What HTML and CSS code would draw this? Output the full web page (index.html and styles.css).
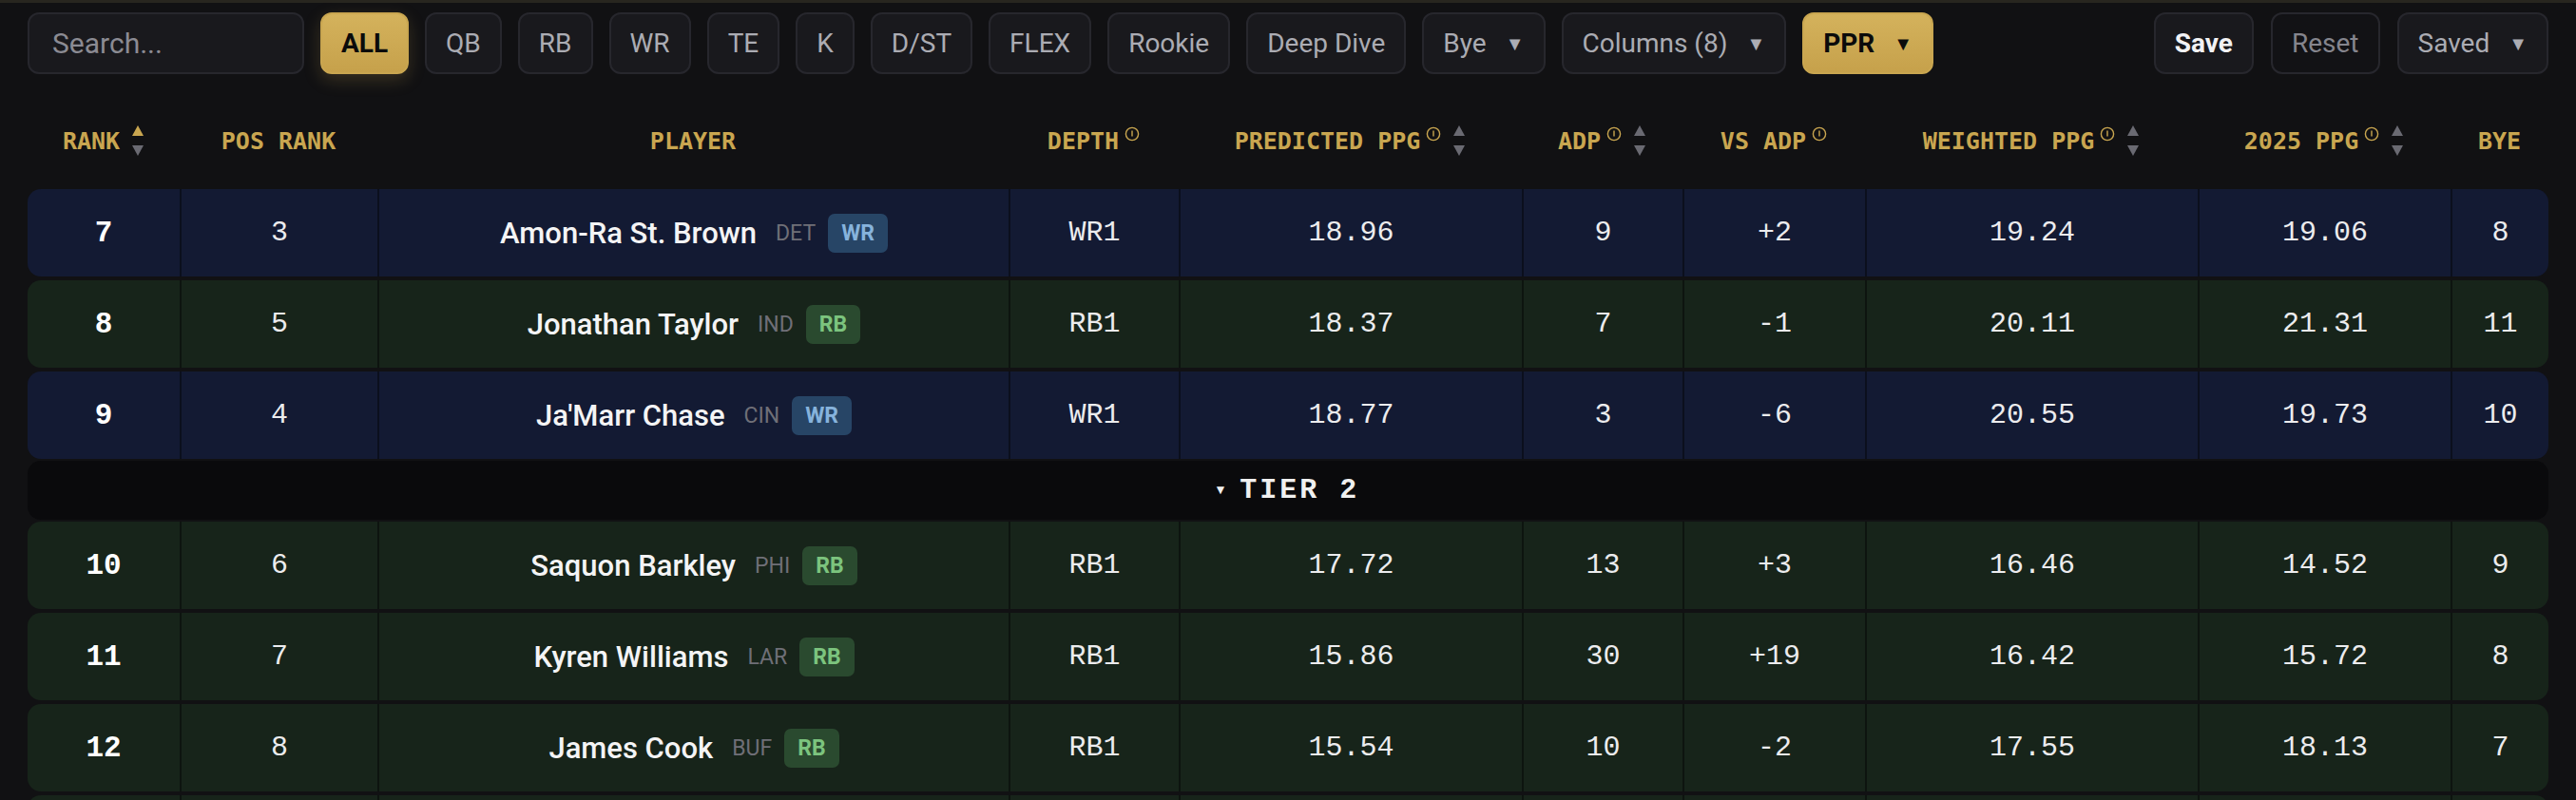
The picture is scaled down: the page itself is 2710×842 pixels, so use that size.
FILE: index.html
```html
<!DOCTYPE html>
<html lang="en">
  <head>
    <meta charset="UTF-8" />
    <title>Draft Rankings</title>
    <link rel="stylesheet" href="styles.css">
  </head>
  <body>
    <div class="page">
      <div class="toolbar">
        <input class="search" type="text" placeholder="Search..." />
        <button class="chip chip-gold chip-glow">ALL</button>
        <button class="chip">QB</button>
        <button class="chip">RB</button>
        <button class="chip">WR</button>
        <button class="chip">TE</button>
        <button class="chip">K</button>
        <button class="chip">D/ST</button>
        <button class="chip">FLEX</button>
        <button class="chip">Rookie</button>
        <button class="chip">Deep Dive</button>
        <button class="chip">Bye <span class="caret">▼</span></button>
        <button class="chip">Columns (8) <span class="caret">▼</span></button>
        <button class="chip chip-gold">PPR <span class="caret">▼</span></button>

        <div class="toolbar-right">
          <button class="chip chip-save">Save</button>
          <button class="chip chip-reset">Reset</button>
          <button class="chip">Saved <span class="caret">▼</span></button>
        </div>
      </div>

      <div class="cols head">
        <div class="hcell">Rank
          <svg class="sort" width="14" height="34" viewBox="0 0 14 34"><path class="up on" d="M7 1 L13 12 H1Z"/><path class="down" d="M1 22 H13 L7 33Z"/></svg>
        </div>
        <div class="hcell">Pos Rank</div>
        <div class="hcell">Player</div>
        <div class="hcell">Depth
          <svg class="info" width="16" height="16" viewBox="0 0 16 16"><circle cx="8" cy="8" r="6.6"/><path d="M8 4.5v6"/></svg>
        </div>
        <div class="hcell">Predicted PPG
          <svg class="info" width="16" height="16" viewBox="0 0 16 16"><circle cx="8" cy="8" r="6.6"/><path d="M8 4.5v6"/></svg>
          <svg class="sort" width="14" height="34" viewBox="0 0 14 34"><path class="up" d="M7 1 L13 12 H1Z"/><path class="down" d="M1 22 H13 L7 33Z"/></svg>
        </div>
        <div class="hcell">ADP
          <svg class="info" width="16" height="16" viewBox="0 0 16 16"><circle cx="8" cy="8" r="6.6"/><path d="M8 4.5v6"/></svg>
          <svg class="sort" width="14" height="34" viewBox="0 0 14 34"><path class="up" d="M7 1 L13 12 H1Z"/><path class="down" d="M1 22 H13 L7 33Z"/></svg>
        </div>
        <div class="hcell">VS ADP
          <svg class="info" width="16" height="16" viewBox="0 0 16 16"><circle cx="8" cy="8" r="6.6"/><path d="M8 4.5v6"/></svg>
        </div>
        <div class="hcell">Weighted PPG
          <svg class="info" width="16" height="16" viewBox="0 0 16 16"><circle cx="8" cy="8" r="6.6"/><path d="M8 4.5v6"/></svg>
          <svg class="sort" width="14" height="34" viewBox="0 0 14 34"><path class="up" d="M7 1 L13 12 H1Z"/><path class="down" d="M1 22 H13 L7 33Z"/></svg>
        </div>
        <div class="hcell">2025 PPG
          <svg class="info" width="16" height="16" viewBox="0 0 16 16"><circle cx="8" cy="8" r="6.6"/><path d="M8 4.5v6"/></svg>
          <svg class="sort" width="14" height="34" viewBox="0 0 14 34"><path class="up" d="M7 1 L13 12 H1Z"/><path class="down" d="M1 22 H13 L7 33Z"/></svg>
        </div>
        <div class="hcell">Bye</div>
      </div>

      <div class="rows">
        <div class="cols row wr">
          <div class="cell rank">7</div>
          <div class="cell">3</div>
          <div class="cell player"><span class="name">Amon-Ra St. Brown</span><span class="team">DET</span><span class="pos pos-wr">WR</span></div>
          <div class="cell">WR1</div>
          <div class="cell">18.96</div>
          <div class="cell">9</div>
          <div class="cell">+2</div>
          <div class="cell">19.24</div>
          <div class="cell">19.06</div>
          <div class="cell">8</div>
        </div>
        <div class="cols row rb">
          <div class="cell rank">8</div>
          <div class="cell">5</div>
          <div class="cell player"><span class="name">Jonathan Taylor</span><span class="team">IND</span><span class="pos pos-rb">RB</span></div>
          <div class="cell">RB1</div>
          <div class="cell">18.37</div>
          <div class="cell">7</div>
          <div class="cell">-1</div>
          <div class="cell">20.11</div>
          <div class="cell">21.31</div>
          <div class="cell">11</div>
        </div>
        <div class="cols row wr">
          <div class="cell rank">9</div>
          <div class="cell">4</div>
          <div class="cell player"><span class="name">Ja'Marr Chase</span><span class="team">CIN</span><span class="pos pos-wr">WR</span></div>
          <div class="cell">WR1</div>
          <div class="cell">18.77</div>
          <div class="cell">3</div>
          <div class="cell">-6</div>
          <div class="cell">20.55</div>
          <div class="cell">19.73</div>
          <div class="cell">10</div>
        </div>

        <div class="tier"><span class="tier-caret">▼</span>TIER 2</div>

        <div class="cols row rb">
          <div class="cell rank">10</div>
          <div class="cell">6</div>
          <div class="cell player"><span class="name">Saquon Barkley</span><span class="team">PHI</span><span class="pos pos-rb">RB</span></div>
          <div class="cell">RB1</div>
          <div class="cell">17.72</div>
          <div class="cell">13</div>
          <div class="cell">+3</div>
          <div class="cell">16.46</div>
          <div class="cell">14.52</div>
          <div class="cell">9</div>
        </div>
        <div class="cols row rb">
          <div class="cell rank">11</div>
          <div class="cell">7</div>
          <div class="cell player"><span class="name">Kyren Williams</span><span class="team">LAR</span><span class="pos pos-rb">RB</span></div>
          <div class="cell">RB1</div>
          <div class="cell">15.86</div>
          <div class="cell">30</div>
          <div class="cell">+19</div>
          <div class="cell">16.42</div>
          <div class="cell">15.72</div>
          <div class="cell">8</div>
        </div>
        <div class="cols row rb">
          <div class="cell rank">12</div>
          <div class="cell">8</div>
          <div class="cell player"><span class="name">James Cook</span><span class="team">BUF</span><span class="pos pos-rb">RB</span></div>
          <div class="cell">RB1</div>
          <div class="cell">15.54</div>
          <div class="cell">10</div>
          <div class="cell">-2</div>
          <div class="cell">17.55</div>
          <div class="cell">18.13</div>
          <div class="cell">7</div>
        </div>
        <div class="cols row rb">
          <div class="cell"></div><div class="cell"></div><div class="cell"></div><div class="cell"></div><div class="cell"></div>
          <div class="cell"></div><div class="cell"></div><div class="cell"></div><div class="cell"></div><div class="cell"></div>
        </div>
      </div>
    </div>
  </body>
</html>
```

FILE: styles.css
```css
:root {
  --bg: #111113;
  --chip-bg: #19191d;
  --chip-border: #27272d;
  --chip-text: #abacb3;
  --gold: #c9a650;
  --gold-light: #d4b25c;
  --navy-row: #131a33;
  --green-row: #17241a;
  --tier-bg: #0a0a0c;
  --muted: #6f6f77;
  --sans: Roboto, "Liberation Sans", sans-serif;
  --mono: "Liberation Mono", "DejaVu Sans Mono", monospace;
  --head-mono: "DejaVu Sans Mono", "Liberation Mono", monospace;
}

html,
body {
  margin: 0;
  padding: 0;
}

body {
  background-color: var(--bg);
  border-top: 3px solid #28261f;
  font-family: var(--sans);
  color: #ececee;
}

.page {
  padding: 10px 29px 0;
}

/* toolbar */

.toolbar {
  display: flex;
  align-items: center;
  gap: 17px;
  height: 65px;
}

.search {
  width: 291px;
  height: 65px;
  box-sizing: border-box;
  padding: 0 24px;
  border: 2px solid var(--chip-border);
  border-radius: 12px;
  background-color: var(--chip-bg);
  font-family: var(--sans);
  font-size: 30px;
  color: #ddd;
  outline: none;
}

.search::placeholder {
  color: #8b8b93;
}

.chip {
  display: flex;
  align-items: center;
  gap: 20px;
  height: 65px;
  box-sizing: border-box;
  padding: 0 20px;
  border: 2px solid var(--chip-border);
  border-radius: 12px;
  background-color: var(--chip-bg);
  font-family: var(--sans);
  font-size: 28px;
  color: var(--chip-text);
  white-space: nowrap;
}

.chip-gold {
  background: linear-gradient(var(--gold-light), #c6a14b);
  border-color: var(--gold);
  color: #0b0b0b;
  font-weight: 700;
}

.chip-glow {
  box-shadow: 0 6px 18px rgba(201, 166, 80, 0.22);
}

.caret {
  font-size: 20px;
}

.toolbar-right {
  display: flex;
  gap: 18px;
  margin-left: auto;
}

.chip-save {
  color: #f2f2f4;
  font-weight: 700;
}

.chip-reset {
  background-color: #121215;
  color: #85858d;
}

/* table */

.cols {
  display: grid;
  grid-template-columns: 160px 208px 664px 179px 361px 169px 192px 350px 266px 103px;
}

.head {
  height: 84px;
  margin: 28px 0 9px;
}

.hcell {
  display: flex;
  align-items: center;
  justify-content: center;
  font-family: var(--head-mono);
  font-weight: 700;
  font-size: 25px;
  text-transform: uppercase;
  color: var(--gold);
  white-space: nowrap;
}

.info {
  margin: 0 0 14px 6px;
  fill: none;
  stroke: var(--gold);
  stroke-width: 1.4;
}

.sort {
  margin-left: 12px;
}

.sort path {
  fill: #6a6a72;
}

.sort path.on {
  fill: var(--gold);
}

.rows {
  display: flex;
  flex-direction: column;
  gap: 4px;
  height: 643px;
  overflow: hidden;
}

.row {
  flex: none;
  height: 92px;
  border-radius: 14px;
  overflow: hidden;
}

.wr {
  background-color: var(--navy-row);
}

.rb {
  background-color: var(--green-row);
}

.cell {
  display: flex;
  align-items: center;
  justify-content: center;
  font-family: var(--mono);
  font-size: 30px;
  color: #ececee;
}

.cell + .cell {
  border-left: 2px solid rgba(0, 0, 0, 0.42);
}

.rank {
  font-weight: 700;
  font-size: 31px;
  color: #fff;
}

.player {
  font-family: var(--sans);
}

.name {
  font-size: 31px;
  font-weight: 500;
  color: #f4f4f5;
}

.team {
  margin-left: 20px;
  font-size: 23px;
  color: var(--muted);
}

.pos {
  margin-left: 13px;
  padding: 0 14px;
  height: 41px;
  line-height: 41px;
  border-radius: 7px;
  font-size: 23px;
  font-weight: 700;
}

.pos-wr {
  background-color: #274566;
  color: #86b3dc;
}

.pos-rb {
  background-color: #2a4a2f;
  color: #7cc47e;
}

.tier {
  flex: none;
  display: flex;
  align-items: center;
  justify-content: center;
  height: 62px;
  margin: -2px 0;
  border-radius: 14px;
  background-color: var(--tier-bg);
  font-family: var(--mono);
  font-weight: 700;
  font-size: 30px;
  letter-spacing: 3px;
  color: #f0f0f0;
}

.tier-caret {
  margin-right: 16px;
  font-size: 14px;
  letter-spacing: 0;
}
```
